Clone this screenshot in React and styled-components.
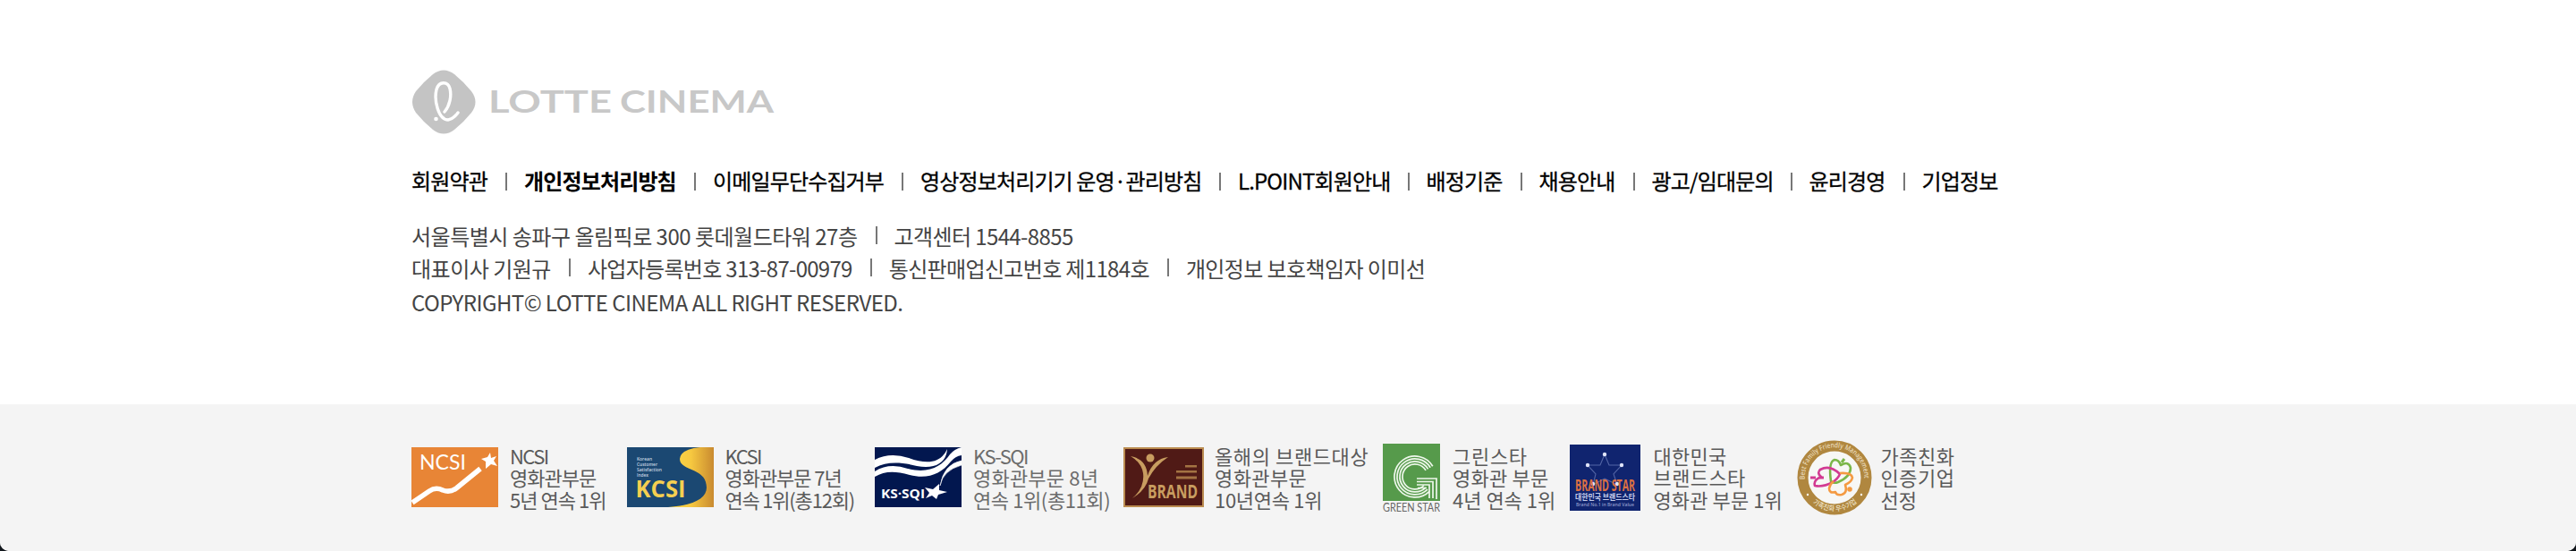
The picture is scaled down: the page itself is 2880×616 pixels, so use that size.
import React from "react";
import styled, { createGlobalStyle } from "styled-components";

const GlobalStyle = createGlobalStyle`
  * { box-sizing: border-box; }
  body {
    margin: 0;
    background: #12171c;
    font-family: "Noto Sans CJK KR", "Noto Sans", sans-serif;
  }
  ul, p { margin: 0; padding: 0; list-style: none; }
  svg { display: block; flex: none; }
`;

const Footer = styled.footer`
  height: 616px;
  display: flex;
  flex-direction: column;
  background: #fff;
  border-radius: 0 0 10px 10px;
  overflow: hidden;
`;

const Info = styled.div`
  height: 452px;
  padding: 78px 0 0 460px;
`;

const Menu = styled.ul`
  display: flex;
  align-items: center;
  height: 36px;
  margin-top: 34px;
`;

const MenuItem = styled.li`
  display: flex;
  align-items: center;
  width: ${(p) => p.$width}px;
  white-space: nowrap;
  font-size: 24px;
  line-height: 36px;
  font-weight: ${(p) => (p.$strong ? 700 : 400)};
  -webkit-text-stroke: ${(p) => (p.$strong ? 0 : 0.3)}px #000;
  letter-spacing: ${(p) => p.$spacing}px;
  color: #000;

  &:not(:last-child)::after {
    content: "";
    width: 2px;
    height: 20px;
    margin: 2px 19px 0 auto;
    background: #777;
  }
`;

const Address = styled.address`
  margin-top: 25px;
  font-style: normal;
  font-size: 24px;
  color: #444;
`;

const Line = styled.p`
  display: flex;
  align-items: center;
  height: ${(p) => p.$height || 36}px;
  white-space: nowrap;
`;

const Segment = styled.span`
  display: flex;
  align-items: center;
  letter-spacing: ${(p) => p.$spacing}px;

  &:not(:first-child)::before {
    content: "";
    width: 2px;
    height: 20px;
    margin: 0 19px 0 20px;
    background: #777;
  }
`;

const AwardBand = styled.div`
  flex: 1;
  padding-left: 460px;
  background: #f4f4f4;
`;

const Awards = styled.ul`
  display: flex;
  align-items: center;
  height: 163px;
`;

const Award = styled.li`
  display: flex;
  align-items: center;
  gap: ${(p) => p.$gap}px;
  width: ${(p) => p.$width}px;
`;

const AwardLine = styled.p`
  height: 24.3px;
  line-height: 24.3px;
  font-size: 22px;
  white-space: nowrap;
  color: ${(p) => p.$color || "#5a5a5a"};
  letter-spacing: ${(p) => p.$spacing}px;
`;

const SvgText = styled.text`
  font-family: ${(p) => p.$family || '"Open Sans"'}, sans-serif;
  font-size: ${(p) => p.$size}px;
  font-weight: ${(p) => p.$weight || 400};
  fill: ${(p) => p.$fill};
`;

const Fit = ({ w, ...rest }) => (
  <SvgText textLength={w} lengthAdjust="spacingAndGlyphs" {...rest} />
);

const Logo = () => (
  <svg width="410" height="72" viewBox="0 0 410 72">
    <path
      d="M24 5Q36-4 48 5Q59 14 67 24Q76 36 67 48Q59 58 48 67Q36 76 24 67Q13 58 5 48Q-3 36 5 24Q13 14 24 5Z"
      fill="#c4c4c4"
    />
    <path
      d="M37 47C43 40 45 29 43 21C41 13 31 12 28 22C25 34 30 56 41 56Q47 55 52 48"
      fill="none" stroke="#fff" strokeWidth="3.4" strokeLinecap="round"
    />
    <circle cx="27.500" cy="55" r="2.300" fill="#fff" />
    <Fit x="86" y="48" w="138" $family="Lato" $size="33.500" $weight="700" $fill="#c8c8c8">LOTTE</Fit>
    <Fit x="233" y="48" w="172" $family="Lato" $size="33.500" $weight="700" $fill="#c8c8c8">CINEMA</Fit>
  </svg>
);

const Ncsi = () => (
  <svg width="97" height="67" viewBox="0 0 97 67">
    <path fill="#e88536" d="M0 0h97v67H0z" />
    <Fit x="9" y="25" w="52" $family="Lato" $size="23" $weight="400" $fill="#fff">NCSI</Fit>
    <path d="M1 62L20 49Q27 44 35 48Q43 51 50 46L77 24" fill="none" stroke="#fff" strokeWidth="5.500" />
    <path d="M88 6l1 6 6-2-3 5 4 6-7-2-6 5 0-8-5-3 7-2z" fill="#fff" />
  </svg>
);

const Kcsi = () => (
  <svg width="97" height="67" viewBox="0 0 97 67">
    <defs>
      <linearGradient id="gold">
        <stop offset="0" stopColor="#fbd94b" />
        <stop offset=".5" stopColor="#f6c840" />
        <stop offset="1" stopColor="#c98a30" />
      </linearGradient>
    </defs>
    <path fill="#1b4872" d="M0 0h97v67H0z" />
    <path fill="url(#gold)" d="M97 0H82Q60 2 59 13C59 27 89 22 89 45C89 57 75 65 46 67H97z" />
    {["Korean", "Customer", "Satisfaction", "Index"].map((word, i) => (
      <Fit key={word} x="11" y={14.5 + i * 6.3} w={[17, 23, 28, 13][i]} $size="5.500" $weight="600" $fill="#c7d5e1">
        {word}
      </Fit>
    ))}
    <Fit x="9.500" y="56" w="56" $size="26" $weight="700" $fill="#f5cf50">KCSI</Fit>
  </svg>
);

const KsSqi = () => (
  <svg width="97" height="67" viewBox="0 0 97 67">
    <path fill="#02174f" d="M0 0h97v67H0z" />
    <path d="M0 14Q17 5 38 12C60 20 74 17 81 2C80 17 68 25 47 21C28 16 13 16 0 23z" fill="#fff" />
    <path d="M0 27Q16 17 37 24C61 30 75 21 84 8Q89 2 97 0V9Q90 10 85 16C74 30 59 36 39 31C21 26 11 27 0 33z" fill="#fff" />
    <path d="M97 15Q77 19 73 43Q76 26 97 20z" fill="#fff" stroke="#fff" strokeWidth=".6" />
    <Fit x="7" y="56.500" w="49" $size="14" $weight="700" $fill="#fff">KS·SQI</Fit>
    <path d="M72 41l0 7 9 2-10 3-2 5-5-4-7 3 4-6-5-6 9 2z" fill="#fff" />
  </svg>
);

const Brand = () => (
  <svg width="90" height="67" viewBox="0 0 90 67">
    <path fill="#501a16" stroke="#bb8c50" strokeWidth="2" d="M1 1h88v65H1z" />
    <circle cx="30" cy="12" r="4.500" fill="#c89d60" />
    <path d="M8 10Q26 13 27 32Q33 13 50 11Q36 20 28 35Q25 48 10 57Q24 45 22 29Q20 17 8 10z" fill="#c89d60" />
    <path d="M69 20h13v2.500H69zM59 26h23v2.500H59zM59 32.500h23v3H59z" fill="#a37343" />
    <Fit x="27" y="57" w="56" $size="21" $weight="700" $fill="#c89d60">BRAND</Fit>
  </svg>
);

const GreenStar = () => (
  <svg width="64" height="76" viewBox="0 0 64 76">
    <path fill="#569a4b" d="M0 0h64v64H0z" />
    <g fill="none" stroke="#eef7eb" strokeWidth="1.700">
      {[23, 20, 17, 14].map((r) => (
        <path key={r} d={`M${36 + r * 0.86} ${37 - r * 0.51}A${r} ${r} 0 1 0 ${36 + r * 0.7} ${37 + r * 0.71}`} />
      ))}
      <path d="M38 39h22v23M38 42.500h18V61M38 46h14v15M39 49.500h10" />
    </g>
    <Fit x="0" y="75.500" w="64" $family="Lato" $size="12.500" $fill="#666">GREEN STAR</Fit>
  </svg>
);

const BrandStar = () => (
  <svg width="79" height="74" viewBox="0 0 79 74">
    <path fill="#10246f" d="M0 0h79v74H0z" />
    <path
      d="M39 11L44 23L58 23L49 33L53 45L39 38L26 45L29 33L20 23L34 23Z"
      fill="none" stroke="#5365a5" strokeWidth="1.100"
    />
    {[[39, 11], [20, 23], [58, 23], [26, 44], [53, 44]].map(([x, y]) => (
      <circle key={`${x}-${y}`} cx={x} cy={y} r="2.200" fill="#dfe4f8" />
    ))}
    <Fit x="6" y="52" w="67" $size="17" $weight="700" $fill="#dc7042">BRAND STAR</Fit>
    <Fit x="6" y="61.500" w="67" $family='"Noto Sans CJK KR"' $size="9" $weight="700" $fill="#c4cceb">대한민국 브랜드스타</Fit>
    <Fit x="7" y="68.500" w="65" $size="6" $weight="600" $fill="#8f9bcb">Brand No.1 in Brand Value</Fit>
  </svg>
);

const Family = () => (
  <svg width="84" height="84" viewBox="0 0 84 84">
    <defs>
      <path id="ring-top" d="M9 46A33.300 33.300 0 1 1 75 46" />
      <path id="ring-bottom" d="M14 67A38 38 0 0 0 70 67" />
    </defs>
    <circle cx="42" cy="42" r="35.500" fill="#f7f7f5" stroke="#b0873f" strokeWidth="12" />
    <SvgText $size="8" $weight="600" $fill="#e8d9b8">
      <textPath href="#ring-top" textLength="108" lengthAdjust="spacingAndGlyphs" startOffset="2">Best Family Friendly Management</textPath>
    </SvgText>
    <SvgText $family='"Noto Sans CJK KR"' $size="8" $weight="500" $fill="#efe3c8">
      <textPath href="#ring-bottom" textLength="54" lengthAdjust="spacingAndGlyphs" startOffset="5">가족친화 우수기업</textPath>
    </SvgText>
    <circle cx="12" cy="61" r="1.200" fill="#fff" />
    <circle cx="72" cy="61" r="1.200" fill="#fff" />
    <g fill="none" strokeWidth="2.600" strokeLinejoin="round">
      <path d="M38 46Q35 24 42 22Q47 22 49 28Q58 23 60 31Q60 41 46 47Q41 49 38 46z" stroke="#7ab648" />
      <path d="M48 38Q37 27 26 33Q22 37 27 41Q18 45 20 51Q29 53 40 47Q46 43 48 38z" stroke="#d23b92" />
      <path d="M48 37Q61 36 62 42Q61 47 54 50Q57 59 50 61Q44 62 43 58Q36 60 36 54Q37 49 41 46" stroke="#f49a42" />
    </g>
    <path d="M50 25L53 21" stroke="#7ab648" strokeWidth="3" />
    <circle cx="59" cy="55" r="2.800" fill="#f49a42" />
    <path d="M15 42h6M25 42h5" stroke="#d23b92" strokeWidth="3" />
  </svg>
);

const menu = [
  ["회원약관", 126, -0.85],
  ["개인정보처리방침", 211, -0.85, true],
  ["이메일무단수집거부", 232, -0.85],
  ["영상정보처리기기 운영·관리방침", 355, -0.85],
  ["L.POINT회원안내", 210.5, -0.85],
  ["배정기준", 126, -0.85],
  ["채용안내", 126, -0.85],
  ["광고/임대문의", 176, -0.8],
  ["윤리경영", 126, -0.85],
  ["기업정보", 90, -0.85],
];

const address = [
  [["서울특별시 송파구 올림픽로 300 롯데월드타워 27층", -0.5], ["고객센터 1544-8855", -0.6]],
  [
    ["대표이사 기원규", -0.5],
    ["사업자등록번호 313-87-00979", -0.7],
    ["통신판매업신고번호 제1184호", -0.65],
    ["개인정보 보호책임자 이미선", -0.6],
  ],
  [["COPYRIGHT© LOTTE CINEMA ALL RIGHT RESERVED.", -0.56]],
];

const awards = [
  { Mark: Ncsi, width: 241, gap: 13, lines: [["NCSI", -1.6], ["영화관부문", -1], ["5년 연속 1위", -0.95]] },
  { Mark: Kcsi, width: 277, gap: 12.5, lines: [["KCSI", -1.6], ["영화관부문 7년", -1.05], ["연속 1위(총12회)", -1.2]] },
  { Mark: KsSqi, width: 278, gap: 13, color: "#6c6c6c", lines: [["KS-SQI", -1.6], ["영화관부문 8년", 0.2], ["연속 1위(총11회)", -0.4]] },
  { Mark: Brand, width: 290, gap: 12, lines: [["올해의 브랜드대상", 0.6], ["영화관부문", 0.4], ["10년연속 1위", -0.3]] },
  { Mark: GreenStar, width: 209, gap: 14, lines: [["그린스타", 0.7], ["영화관 부문", 0.2], ["4년 연속 1위", 0]] },
  { Mark: BrandStar, width: 254, gap: 14.5, lines: [["대한민국", 0.3], ["브랜드스타", 0.4], ["영화관 부문 1위", 0.1]] },
  { Mark: Family, width: 190, gap: 9.5, lines: [["가족친화", 0.5], ["인증기업", 0.5], ["선정", 0]] },
];

export default function App() {
  return (
    <>
      <GlobalStyle />
      <Footer>
        <Info>
          <Logo />
          <Menu>
            {menu.map(([label, width, spacing, strong]) => (
              <MenuItem key={label} $width={width} $spacing={spacing} $strong={strong}>{label}</MenuItem>
            ))}
          </Menu>
          <Address>
            {address.map((segments, i) => (
              <Line key={segments[0][0]} $height={i === 2 ? 40 : 36}>
                {segments.map(([text, spacing]) => (
                  <Segment key={text} $spacing={spacing}>{text}</Segment>
                ))}
              </Line>
            ))}
          </Address>
        </Info>
        <AwardBand>
          <Awards>
            {awards.map(({ Mark, width, gap, color, lines }) => (
              <Award key={lines[0][0]} $width={width} $gap={gap}>
                <Mark />
                <div>
                  {lines.map(([text, spacing]) => (
                    <AwardLine key={text} $spacing={spacing} $color={color}>{text}</AwardLine>
                  ))}
                </div>
              </Award>
            ))}
          </Awards>
        </AwardBand>
      </Footer>
    </>
  );
}
